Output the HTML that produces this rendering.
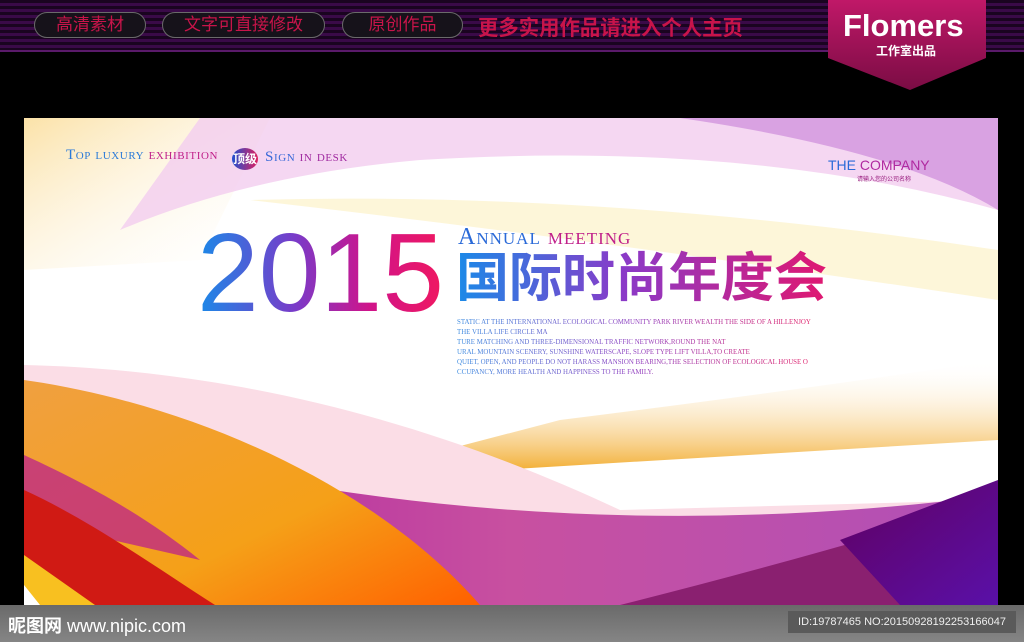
<!DOCTYPE html>
<html><head><meta charset="utf-8"><style>
*{margin:0;padding:0}
body{width:1024px;height:642px;overflow:hidden;background:#000;position:relative;font-family:"Liberation Sans","Noto Sans CJK SC",sans-serif}
.hdr{position:absolute;left:0;top:0;width:1024px;height:50px;background:repeating-linear-gradient(180deg,#1a0420 0,#1a0420 3px,#3a0a48 3px,#3a0a48 6px);border-bottom:2px solid #5a1a6a}
.btn{position:absolute;top:12px;height:24px;border:1px solid #6a6a6a;border-radius:13px;background:#16121a;color:#c8144a;font-size:17px;line-height:24px;text-align:center}
.abs{position:absolute;white-space:nowrap}
.para{font-family:"Liberation Serif",serif;font-size:6.9px;line-height:10px;background:linear-gradient(90deg,#3a8ae0,#9040c0 50%,#e0206a);-webkit-background-clip:text;color:transparent}
</style></head><body>
<div class="hdr"></div>
<div class="btn" style="left:34px;width:110px">高清素材</div>
<div class="btn" style="left:162px;width:161px">文字可直接修改</div>
<div class="btn" style="left:342px;width:119px">原创作品</div>
<div class="abs" style="left:478px;top:12px;font-size:21px;font-weight:bold;color:#c8144a;transform:scaleX(.97);transform-origin:left">更多实用作品请进入个人主页</div>
<svg class="abs" style="left:826px;top:0" width="162" height="92"><defs><linearGradient id="bd" x1="0" y1="0" x2="0" y2="1"><stop offset="0" stop-color="#c01868"/><stop offset="1" stop-color="#7a0c44"/></linearGradient></defs><polygon points="2,0 160,0 160,58 84,90 2,58" fill="url(#bd)"/></svg>
<div class="abs" style="left:843px;top:8px;font-size:31px;font-weight:bold;color:#fff">Flomers</div>
<div class="abs" style="left:876px;top:42px;font-size:12px;font-weight:bold;color:#fff">工作室出品</div>

<svg class="abs" style="left:24px;top:118px" width="974" height="487" viewBox="24 118 974 487">
<defs>
<linearGradient id="yl" x1="0" y1="0" x2="1" y2="1"><stop offset="0" stop-color="#fbe2a8"/><stop offset="1" stop-color="#fff" stop-opacity="0"/></linearGradient>
<linearGradient id="or" x1="0" y1="0" x2="0" y2="1"><stop offset="0" stop-color="#fff" stop-opacity="0"/><stop offset="1" stop-color="#f0a010"/></linearGradient>
<linearGradient id="pu" x1="0" y1="0" x2="1" y2="0"><stop offset="0" stop-color="#a81aa0"/><stop offset=".5" stop-color="#c850a0"/><stop offset="1" stop-color="#b050b8"/></linearGradient>
<linearGradient id="og" x1="0" y1="0" x2="1" y2="1"><stop offset="0" stop-color="#f0a040"/><stop offset=".6" stop-color="#f5a018"/><stop offset="1" stop-color="#ff6000"/></linearGradient>
<linearGradient id="dp" x1="0" y1="0" x2="1" y2="1"><stop offset="0" stop-color="#600060"/><stop offset="1" stop-color="#5a10a8"/></linearGradient>
</defs>
<rect x="24" y="118" width="974" height="487" fill="#fff"/>
<path d="M24,118 L270,118 L200,260 L24,270Z" fill="url(#yl)"/>
<path d="M200,118 L998,118 L998,210 Q750,140 420,160 Q250,175 120,230 Z" fill="#f2cdef" opacity=".8"/>
<path d="M680,118 L998,118 L998,210 Q900,150 680,118Z" fill="#d9a2e2"/>
<path d="M250,200 Q600,190 998,250 L998,300 Q600,240 250,200Z" fill="#fcf0c0" opacity=".6"/>
<path d="M330,480 L998,440 L998,360 Q800,390 560,420 Z" fill="url(#or)"/>
<path d="M24,365 C250,370 450,430 620,510 L998,500 L998,605 L24,605 Z" fill="#fbdde6"/>
<path d="M320,488 Q650,540 998,495 L998,605 L24,605 L24,450 Z" fill="url(#pu)"/>
<path d="M24,440 Q200,460 330,490 L250,520 L24,480Z" fill="#b81890"/>
<path d="M620,605 Q800,560 998,500 L998,605Z" fill="#8a2070"/>
<path d="M840,540 L998,480 L998,605 L900,605Z" fill="url(#dp)"/>
<path d="M24,380 C200,405 380,490 480,605 L24,605 Z" fill="url(#og)"/>
<path d="M24,455 C100,490 150,520 200,560 L24,520Z" fill="#b81890" opacity=".7"/>
<path d="M24,490 C90,520 160,570 215,605 L24,605 Z" fill="#d01a14"/>
<path d="M24,555 L95,605 L24,605Z" fill="#f8c020"/>
<path d="M24,585 L40,605 L24,605Z" fill="#fff"/>
</svg>

<div class="abs" style="left:66px;top:147px;font-family:'Liberation Serif',serif;font-size:15px;letter-spacing:.6px;font-variant:small-caps;color:#2a7ad8">Top luxury <span style="color:#c0208a">exhibition</span></div>
<div class="abs" style="left:232px;top:148px;width:26px;height:22px;border-radius:50%;background:linear-gradient(90deg,#2050d0,#e02060);color:#fff;font-size:12px;font-weight:bold;line-height:22px;text-align:center">顶级</div>
<div class="abs" style="left:265px;top:149px;font-family:'Liberation Serif',serif;font-size:15px;letter-spacing:.6px;font-variant:small-caps;color:#3a6ad8">Sign <span style="color:#a02aa0">in desk</span></div>
<div class="abs" style="left:828px;top:157px;font-size:14px;color:#2a6ad8">THE <span style="color:#b02aa0">COMPANY</span></div>
<div class="abs" style="left:857px;top:174px;font-size:6px;color:#9a2080">请输入您的公司名称</div>

<div class="abs" style="left:197px;top:218px;font-size:111px;line-height:111px;background:linear-gradient(90deg,#1a8ae8,#7a3ac8 40%,#d0148a 70%,#f01860);-webkit-background-clip:text;color:transparent">2015</div>
<div class="abs" style="left:458px;top:224px;font-family:'Liberation Serif',serif;font-size:24px;letter-spacing:1px;font-variant:small-caps;color:#2a6ad8">Annual <span style="color:#c0208a">meeting</span></div>
<div class="abs" style="left:456px;top:249px;font-size:53px;font-weight:bold;line-height:60px;background:linear-gradient(90deg,#1a8ae8,#8a3ac8 45%,#e01870);-webkit-background-clip:text;color:transparent">国际时尚年度会</div>
<div class="abs para" style="left:457px;top:318px">STATIC AT THE INTERNATIONAL ECOLOGICAL COMMUNITY PARK RIVER WEALTH THE SIDE OF A HILLENJOY<br>THE VILLA LIFE CIRCLE MA<br>TURE MATCHING AND THREE-DIMENSIONAL TRAFFIC NETWORK,ROUND THE NAT<br>URAL MOUNTAIN SCENERY, SUNSHINE WATERSCAPE, SLOPE TYPE LIFT VILLA,TO CREATE<br>QUIET, OPEN, AND PEOPLE DO NOT HARASS MANSION BEARING,THE SELECTION OF ECOLOGICAL HOUSE O<br>CCUPANCY, MORE HEALTH AND HAPPINESS TO THE FAMILY.</div>

<div class="abs" style="left:0;top:605px;width:1024px;height:37px;background:linear-gradient(180deg,#6a6a6a,#858585)"></div>
<div class="abs" style="left:8px;top:612px;font-size:18px;font-weight:bold;color:#fff">昵图网 <span style="font-weight:normal">www.nipic.com</span></div>
<div class="abs" style="left:788px;top:611px;width:228px;height:22px;background:#5a5a5a;color:#eee;font-size:11px;line-height:22px;text-align:center">ID:19787465 NO:20150928192253166047</div>
</body></html>
